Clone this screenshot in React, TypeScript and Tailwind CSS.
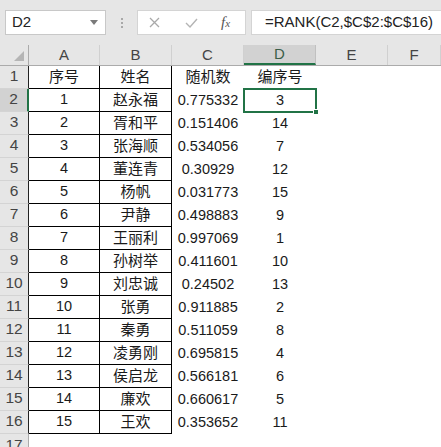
import React from 'react';

const rows: [string, string, string, string][] = [
  ['序号', '姓名', '随机数', '编序号'],
  ['1', '赵永福', '0.775332', '3'],
  ['2', '胥和平', '0.151406', '14'],
  ['3', '张海顺', '0.534056', '7'],
  ['4', '董连青', '0.30929', '12'],
  ['5', '杨帆', '0.031773', '15'],
  ['6', '尹静', '0.498883', '9'],
  ['7', '王丽利', '0.997069', '1'],
  ['8', '孙树举', '0.411601', '10'],
  ['9', '刘忠诚', '0.24502', '13'],
  ['10', '张勇', '0.911885', '2'],
  ['11', '秦勇', '0.511059', '8'],
  ['12', '凌勇刚', '0.695815', '4'],
  ['13', '侯启龙', '0.566181', '6'],
  ['14', '廉欢', '0.660617', '5'],
  ['15', '王欢', '0.353652', '11'],
];

const cols = ['A', 'B', 'C', 'D', 'E', 'F'];
const widths = ['w-[71px]', 'w-[72px]', 'w-[72px]', 'w-[72px]', 'w-[72px]', 'w-[53px]'];

const isCjk = (s: string) => /[\u4e00-\u9fff]/.test(s);

const Cell = ({ text, className }: { text?: string; className: string }) => (
  <div className={`flex shrink-0 items-center justify-center h-full ${className}`}>
    {text && (
      <span className={isCjk(text) ? 'text-[15px]' : 'text-[14.5px]'}>{text}</span>
    )}
  </div>
);

const App = () => {
  return (
    <div
      className="w-[441px] h-[447px] overflow-hidden bg-white text-[#1a1a1a]"
      style={{ fontFamily: '"Liberation Sans", "Noto Sans CJK SC", sans-serif' }}
    >
      {/* formula bar */}
      <div className="h-[45px] bg-[#e6e6e6] flex items-center">
        <div className="ml-[5px] w-[101px] h-[25px] bg-white border border-[#c8c8c8] flex items-center justify-between pl-[6px] pr-[7px]">
          <span className="text-[15px] text-[#222]">D2</span>
          <svg width="8" height="5" viewBox="0 0 8 5">
            <path d="M0 0 L8 0 L4 5 Z" fill="#7a7a7a" />
          </svg>
        </div>
        <div className="w-[31px] flex flex-col items-center gap-[2px]">
          <span className="w-[2px] h-[2px] bg-[#a8a8a8]" />
          <span className="w-[2px] h-[2px] bg-[#a8a8a8]" />
          <span className="w-[2px] h-[2px] bg-[#a8a8a8]" />
        </div>
        <div className="w-[109px] h-[25px] bg-white border border-[#d4d4d4] flex items-center">
          <svg className="ml-[11px]" width="11" height="11" viewBox="0 0 11 11">
            <path d="M1 1 L10 10 M10 1 L1 10" stroke="#a9a9a9" strokeWidth="1.3" />
          </svg>
          <svg className="ml-[25px]" width="13" height="10" viewBox="0 0 13 10">
            <path d="M1 5 L5 9 L12 1" stroke="#b4b4b4" strokeWidth="1.4" fill="none" />
          </svg>
          <span
            className="ml-[23px] text-[15px] italic text-[#555] leading-none"
            style={{ fontFamily: '"Liberation Serif", serif' }}
          >
            f<span className="text-[11px]">x</span>
          </span>
        </div>
        <div className="ml-[5px] flex-1 h-[25px] bg-white border border-[#d4d4d4] border-r-0 flex items-center pl-[13px]">
          <span className="text-[15px] text-[#222]">=RANK(C2,$C$2:$C$16)</span>
        </div>
      </div>

      {/* column headers */}
      <div className="flex h-[21px] bg-[#e6e6e6] border-b border-[#ababab]">
        <div className="w-[29px] shrink-0 border-r border-[#ababab] relative">
          <svg className="absolute right-[4px] bottom-[4px]" width="10" height="10" viewBox="0 0 10 10">
            <path d="M10 0 L10 10 L0 10 Z" fill="#b5b5b5" />
          </svg>
        </div>
        {cols.map((c, i) => (
          <div
            key={c}
            className={`${widths[i]} shrink-0 flex items-center justify-center text-[15px] border-r ${
              c === 'D'
                ? 'bg-[#d2d2d2] border-[#c0c0c0] border-b-2 border-b-[#217346] text-[#3b5e48]'
                : 'border-[#d0d0d0] text-[#444]'
            }`}
          >
            {c}
          </div>
        ))}
      </div>

      {/* rows */}
      {rows.map((r, ri) => {
        const n = ri + 1;
        const sel = n === 2;
        return (
          <div key={n} className="flex h-[23px]">
            <div
              className={`w-[29px] shrink-0 flex items-end justify-center pb-[1px] text-[15.5px] text-[#444] border-b border-b-[#d4d4d4] ${
                sel ? 'bg-[#d2d2d2] border-r-2 border-r-[#217346]' : 'bg-[#e6e6e6] border-r border-r-[#222]'
              }`}
            >
              {n}
            </div>
            <Cell text={r[0]} className={`${widths[0]} border-r border-b border-black`} />
            <Cell text={r[1]} className={`${widths[1]} border-r border-b border-black`} />
            <Cell text={r[2]} className={widths[2]} />
            <div className={`${widths[3]} shrink-0 h-full relative`}>
              {sel && (
                <div className="absolute left-[-1px] top-[-1px] right-[-1px] bottom-[-1px] border-2 border-[#217346]">
                  <span className="absolute right-[-4px] bottom-[-4px] w-[6px] h-[6px] bg-[#217346] border border-white" />
                </div>
              )}
              <Cell text={r[3]} className="w-full" />
            </div>
            <Cell className={widths[4]} />
            <Cell className={widths[5]} />
          </div>
        );
      })}
      <div className="flex h-[23px]">
        <div className="w-[29px] shrink-0 flex items-end justify-center pb-[1px] text-[15.5px] text-[#444] bg-[#e6e6e6] border-r border-[#ababab]">
          17
        </div>
      </div>
    </div>
  );
};

export default App;
